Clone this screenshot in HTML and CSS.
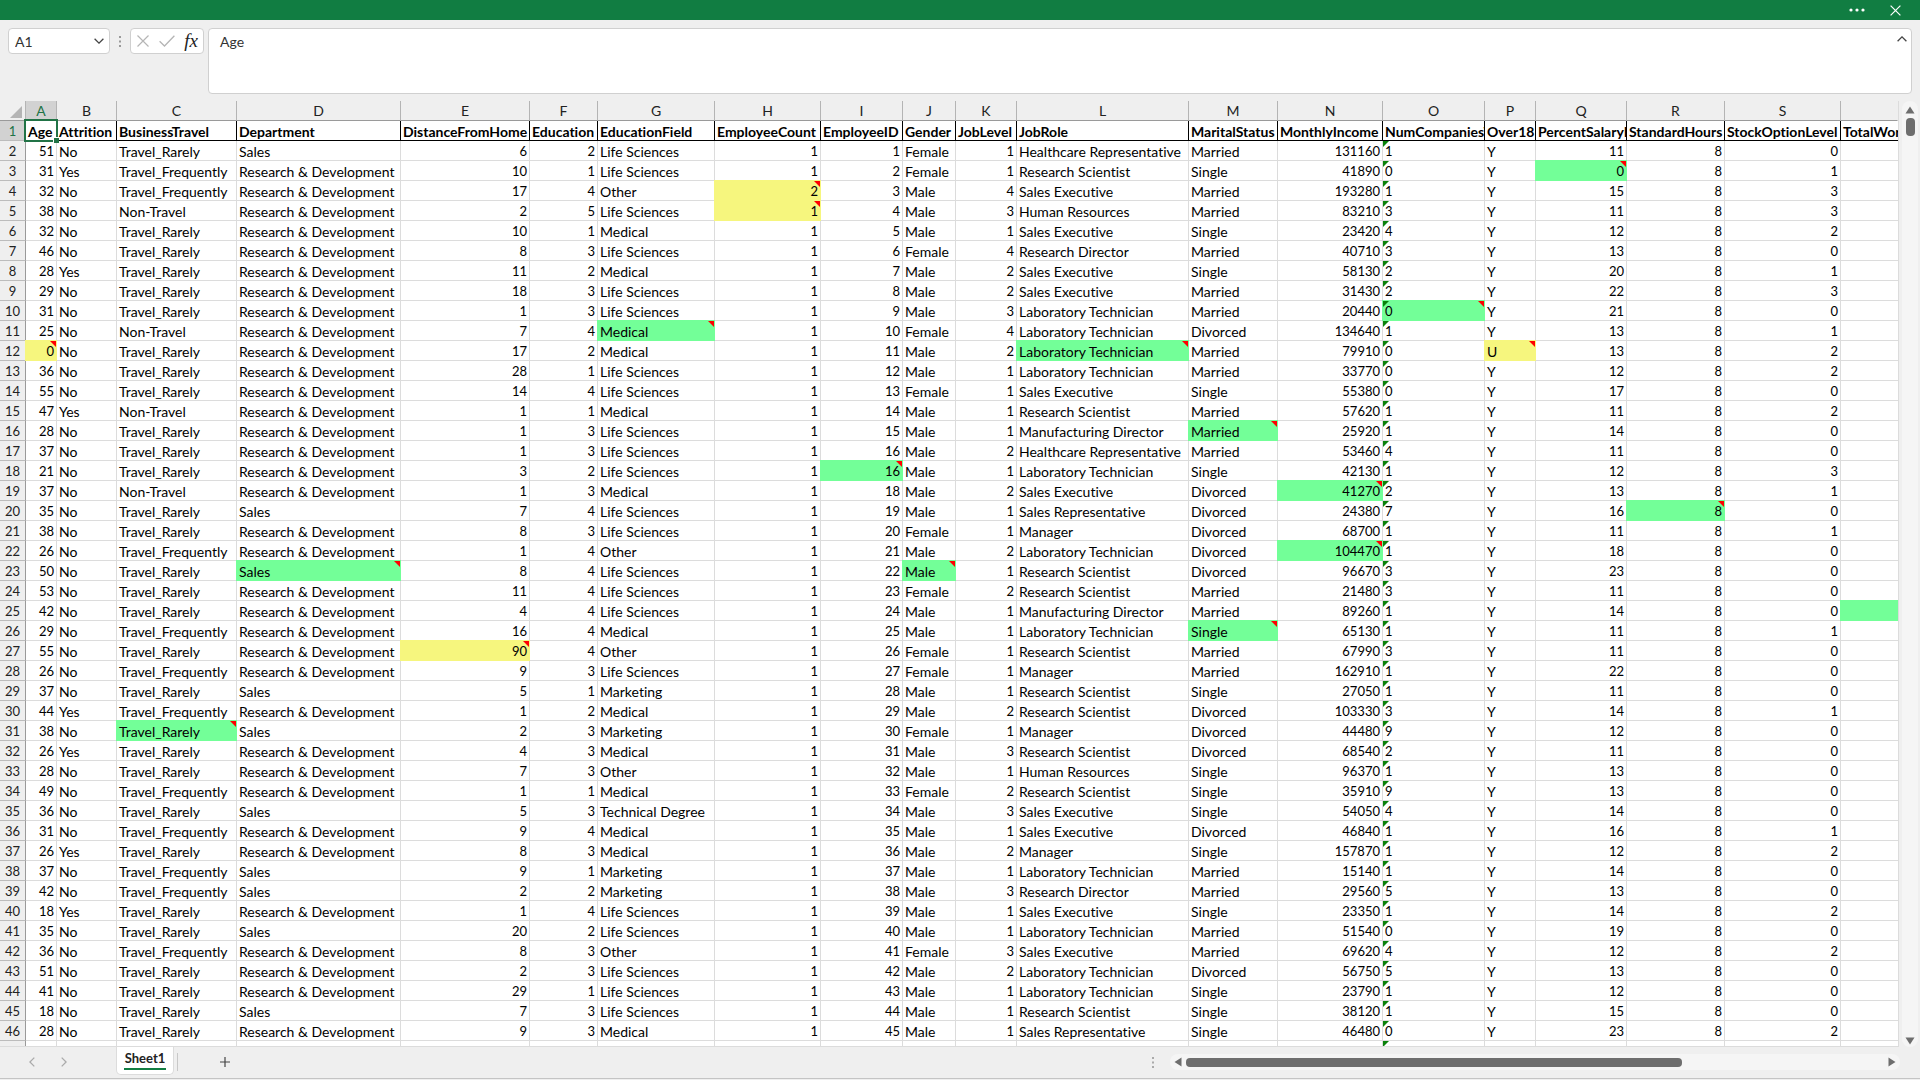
FILE: index.html
```html
<!DOCTYPE html>
<html lang="en">
<head>
<meta charset="utf-8">
<meta name="viewport" content="width=device-width, initial-scale=1">
<title>Sheet1</title>
<link rel="stylesheet" href="styles.css">
</head>
<body>
<header class="titlebar">
  <button class="title-btn" type="button" aria-label="More options">
    <svg width="16" height="4" viewBox="0 0 16 4"><circle cx="2" cy="2" r="1.6" fill="#fff"/><circle cx="8" cy="2" r="1.6" fill="#fff"/><circle cx="14" cy="2" r="1.6" fill="#fff"/></svg>
  </button>
  <button class="title-btn" type="button" aria-label="Close">
    <svg width="11" height="11" viewBox="0 0 11 11"><path d="M.6.6l9.8 9.8M10.4.6L.6 10.4" stroke="#fff" stroke-width="1.2"/></svg>
  </button>
</header>

<section class="formula-bar" aria-label="Formula bar">
  <div class="name-box">
    <input class="name-input" type="text" value="A1" aria-label="Name box">
    <button class="icon-btn" type="button" aria-label="Show names">
      <svg width="10" height="6" viewBox="0 0 10 6"><path d="M.6.7L5 5.1 9.4.7" fill="none" stroke="#444" stroke-width="1.3"/></svg>
    </button>
  </div>
  <svg class="grip" width="2" height="11" viewBox="0 0 2 11"><path d="M0 0h2v2H0zM0 4.500h2v2H0zM0 9h2v2H0z" fill="#999"/></svg>
  <div class="formula-actions">
    <button class="icon-btn" type="button" aria-label="Cancel">
      <svg width="12" height="12" viewBox="0 0 12 12"><path d="M.5.500l11 11M11.500.5l-11 11" stroke="#b5b5b5" stroke-width="1.200"/></svg>
    </button>
    <button class="icon-btn" type="button" aria-label="Enter">
      <svg width="16" height="12" viewBox="0 0 16 12"><path d="M.6 6.200L5.500 11 15.400.8" fill="none" stroke="#b5b5b5" stroke-width="1.300"/></svg>
    </button>
    <button class="icon-btn fx" type="button" aria-label="Insert function">fx</button>
  </div>
  <div class="formula-box">
    <textarea class="formula-input" aria-label="Formula">Age</textarea>
    <button class="icon-btn collapse" type="button" aria-label="Collapse formula bar">
      <svg width="10" height="6" viewBox="0 0 10 6"><path d="M.6 5.300L5 .9l4.400 4.400" fill="none" stroke="#444" stroke-width="1.3"/></svg>
    </button>
  </div>
</section>

<main class="workspace">
  <div class="grid-view">
    <table class="grid">
      <colgroup>
        <col class="w26"><col class="w31"><col class="w60"><col class="w120"><col class="w164"><col class="w129"><col class="w68"><col class="w117"><col class="w106"><col class="w82"><col class="w53"><col class="w61"><col class="w172"><col class="w89"><col class="w105"><col class="w102"><col class="w51"><col class="w91"><col class="w98"><col class="w116"><col>
      </colgroup>
      <thead id="letters"></thead>
      <tbody id="rows"></tbody>
    </table>
  </div>
  <div class="vscroll">
    <svg width="10" height="8" viewBox="0 0 10 8"><path d="M5 .5L9.500 7.500h-9z" fill="#6e6e6e"/></svg>
    <span class="vthumb"></span>
    <svg class="down" width="10" height="8" viewBox="0 0 10 8"><path d="M5 7.500L9.500.5h-9z" fill="#6e6e6e"/></svg>
  </div>
</main>

<footer class="bottom-bar">
  <nav class="sheets" aria-label="Sheets">
    <button class="icon-btn nav" type="button" aria-label="Previous sheet"><svg width="6" height="10" viewBox="0 0 6 10"><path d="M5.300.6L.9 5l4.400 4.400" fill="none" stroke="#aaa" stroke-width="1.300"/></svg></button>
    <button class="icon-btn nav" type="button" aria-label="Next sheet"><svg width="6" height="10" viewBox="0 0 6 10"><path d="M.7.6L5.100 5 .7 9.400" fill="none" stroke="#aaa" stroke-width="1.300"/></svg></button>
    <button class="sheet-tab" type="button"><span class="sheet-name">Sheet1</span></button>
    <span class="tab-line"></span>
    <button class="icon-btn add" type="button" aria-label="New sheet"><svg width="10" height="10" viewBox="0 0 10 10"><path d="M5 0v10M0 5h10" stroke="#444" stroke-width="1.200"/></svg></button>
  </nav>
  <svg class="grip" width="2" height="11" viewBox="0 0 2 11"><path d="M0 0h2v2H0zM0 4.500h2v2H0zM0 9h2v2H0z" fill="#aaa"/></svg>
  <div class="hscroll">
    <svg width="8" height="10" viewBox="0 0 8 10"><path d="M.5 5L7.500.5v9z" fill="#6e6e6e"/></svg>
    <div class="htrack"><span class="hthumb"></span></div>
    <svg width="8" height="10" viewBox="0 0 8 10"><path d="M7.500 5L.5.500v9z" fill="#6e6e6e"/></svg>
  </div>
</footer>
<script src="sheet.js"></script>
</body>
</html>
```
FILE: styles.css
```css
* { box-sizing: border-box; }

body {
  margin: 0;
  height: 100vh;
  display: flex;
  flex-direction: column;
  overflow: hidden;
  background: #efefef;
  color: #000;
  font-family: Lato, "Liberation Sans", sans-serif;
  font-size: 14px;
  font-variant-ligatures: none;
}

button, input, textarea {
  font: inherit;
  color: inherit;
  border: 0;
  padding: 0;
  margin: 0;
  background: none;
}

.icon-btn {
  display: flex;
  align-items: center;
  justify-content: center;
}

/* Title bar */
.titlebar {
  flex: none;
  height: 20px;
  display: flex;
  justify-content: flex-end;
  padding-right: 6px;
  background: #117d42;
}

.title-btn {
  width: 38px;
  display: flex;
  align-items: center;
  justify-content: center;
}

/* Formula bar */
.formula-bar {
  flex: none;
  display: flex;
  align-items: flex-start;
  padding: 8px 8px 7px;
}

.name-box, .formula-actions, .formula-box {
  display: flex;
  background: #fff;
  border: 1px solid #d0d0d0;
  border-radius: 4px;
}

.name-box {
  width: 102px;
  height: 26px;
  padding: 0 5px 0 6px;
}

.name-input { flex: 1; min-width: 0; color: #333; }

.name-box .icon-btn { width: 10px; }

.formula-bar .grip { margin: 8px 9px 0; }

.formula-actions {
  width: 74px;
  height: 26px;
  padding: 0 5px 0 6px;
  justify-content: space-between;
}

.fx {
  font-family: "Liberation Serif", serif;
  font-style: italic;
  font-size: 19px;
  color: #222;
}

.formula-box {
  flex: 1;
  height: 66px;
  margin-left: 4px;
}

.formula-input {
  flex: 1;
  padding: 3px 11px;
  resize: none;
  line-height: 20px;
  color: #333;
}

.collapse { width: 18px; height: 20px; }

/* Grid */
.workspace {
  flex: 1;
  min-height: 0;
  display: flex;
}

.grid-view {
  flex: 1;
  min-width: 0;
  overflow: hidden;
  border-right: 1px solid #dcdcdc;
  border-bottom: 1px solid #dcdcdc;
  background: #fff;
}

.grid {
  width: 100%;
  table-layout: fixed;
  border-collapse: separate;
  border-spacing: 0;
}

.w26 { width: 26px; } .w31 { width: 31px; } .w51 { width: 51px; }
.w53 { width: 53px; } .w60 { width: 60px; } .w61 { width: 61px; }
.w68 { width: 68px; } .w82 { width: 82px; } .w89 { width: 89px; }
.w91 { width: 91px; } .w98 { width: 98px; } .w102 { width: 102px; }
.w105 { width: 105px; } .w106 { width: 106px; } .w116 { width: 116px; }
.w117 { width: 117px; } .w120 { width: 120px; } .w129 { width: 129px; }
.w164 { width: 164px; } .w172 { width: 172px; }

.grid th, .grid td {
  position: relative;
  height: 20px;
  padding: 0;
  line-height: 19px;
  white-space: nowrap;
  border-right: 1px solid #dcdcdc;
  border-bottom: 1px solid #dcdcdc;
}

.clip {
  display: block;
  height: 19px;
  padding: 0 2px;
  overflow: hidden;
  line-height: 21px;
  text-align: left;
}

.num .clip { text-align: right; }
.row-no .clip { text-align: center; }
.num, .warn, .row-no { font-size: 13px; }

.grid thead th {
  background: #efefef;
  border-right: 1px solid #b4b4b4;
  border-bottom: 1px solid #9a9a9a;
  font-weight: normal;
  color: #222;
}

.grid thead th:last-child { border-right-color: #efefef; }

.grid thead .picked {
  background: #d2d2d2;
  color: #217346;
}

.corner svg { display: block; margin: 2px 3px 0 10px; }

.grid .row-no {
  background: #efefef;
  border-right: 1px solid #9a9a9a;
  border-bottom: 1px solid #bcbcbc;
  font-weight: normal;
  color: #222;
}

.grid .row-no.picked { background: #d2d2d2; color: #217346; }

.grid .field {
  font-weight: bold;
  border-right-color: #000;
  border-bottom-color: #000;
}

.grid .field:last-child, .grid td:last-child { border-right: 0; }

.grid .hit-green { background: #73ff98; border-color: #73ff98; box-shadow: -1px 0 #73ff98, 0 -1px #73ff98, -1px -1px #73ff98; }
.grid .hit-yellow { background: #f6f67e; border-color: #f6f67e; box-shadow: -1px 0 #f6f67e, 0 -1px #f6f67e, -1px -1px #f6f67e; }

/* Corner flags: red for a comment, green for text stored as a number */
.note::after, .warn::before {
  content: "";
  position: absolute;
  top: 0;
  width: 6px;
  height: 6px;
}

.note::after { right: 0; background: #f00; clip-path: polygon(0 0, 100% 0, 100% 100%); }
.warn::before { left: 0; background: #0a820a; clip-path: polygon(0 0, 100% 0, 0 100%); }

.cursor {
  position: absolute;
  inset: -2px;
  z-index: 2;
  border: 2px solid #217346;
}

.cursor::after {
  content: "";
  position: absolute;
  right: -3px;
  bottom: -3px;
  width: 5px;
  height: 5px;
  background: #217346;
  box-shadow: -1px -1px 0 #fff;
}

/* Scroll bars */
.vscroll {
  flex: none;
  width: 16px;
  margin: 0 2px 0 3px;
  padding: 5px 0 2px;
  display: flex;
  flex-direction: column;
  align-items: center;
  gap: 4px;
  background: #f5f5f5;
  border-radius: 8px;
}

.vthumb { width: 9px; height: 18px; border-radius: 4px; background: #6e6e6e; }

.down { margin-top: auto; }

.bottom-bar {
  flex: none;
  height: 32px;
  display: flex;
  align-items: flex-start;
  border-bottom: 1px solid #c4c4c4;
  margin-bottom: 1px;
}

.sheets { flex: 1; display: flex; }

.nav { width: 32px; height: 30px; }
.nav:first-child { margin-left: 16px; }

.sheet-tab {
  height: 28px;
  width: 58px;
  margin-left: 36px;
  padding: 0 7px 3px;
  background: #fff;
  border: 1px solid #dcdcdc;
  border-top: 0;
  border-radius: 0 0 5px 5px;
  font-weight: bold;
  font-size: 13px;
  color: #222;
  text-align: center;
}

.sheet-name {
  display: block;
  line-height: 20px;
  border-bottom: 2px solid #117d42;
}

.tab-line { width: 1px; height: 18px; margin: 6px 0 0 3px; background: #c8c8c8; }

.add { width: 30px; height: 30px; margin-left: 32px; }

.bottom-bar .grip { margin: 10px 16px 0 0; }

.hscroll {
  width: 38%;
  height: 16px;
  margin: 7px 20px 0 0;
  padding: 0 4px;
  display: flex;
  align-items: center;
  gap: 4px;
  background: #f5f5f5;
  border-radius: 8px;
}

.htrack { flex: 1; display: flex; }

.hthumb { width: 71%; height: 9px; border-radius: 4px; background: #6e6e6e; }
```
FILE: sheet.js
```js
const fields = ["Age", "Attrition", "BusinessTravel", "Department", "DistanceFromHome", "Education", "EducationField", "EmployeeCount", "EmployeeID", "Gender", "JobLevel", "JobRole", "MaritalStatus", "MonthlyIncome", "NumCompaniesWorked", "Over18", "PercentSalaryHike", "StandardHours", "StockOptionLevel", "TotalWorkingYears"];

// Short codes used in the records below, by column letter.
const names = {
  B: { N: "No", Y: "Yes" },
  C: { R: "Travel_Rarely", F: "Travel_Frequently", N: "Non-Travel" },
  D: { S: "Sales", R: "Research & Development" },
  G: { L: "Life Sciences", M: "Medical", O: "Other", K: "Marketing", T: "Technical Degree" },
  J: { F: "Female", M: "Male" },
  L: { HC: "Healthcare Representative", RS: "Research Scientist", SE: "Sales Executive", HR: "Human Resources", RD: "Research Director", LT: "Laboratory Technician", MD: "Manufacturing Director", SR: "Sales Representative", MG: "Manager" },
  M: { M: "Married", S: "Single", D: "Divorced" }
};

// One record per sheet row, columns A to S, starting at row 2.
const records = `
51 N R S 6 2 L 1 1 F 1 HC M 131160 1 Y 11 8 0
31 Y F R 10 1 L 1 2 F 1 RS S 41890 0 Y 0 8 1
32 N F R 17 4 O 2 3 M 4 SE M 193280 1 Y 15 8 3
38 N N R 2 5 L 1 4 M 3 HR M 83210 3 Y 11 8 3
32 N R R 10 1 M 1 5 M 1 SE S 23420 4 Y 12 8 2
46 N R R 8 3 L 1 6 F 4 RD M 40710 3 Y 13 8 0
28 Y R R 11 2 M 1 7 M 2 SE S 58130 2 Y 20 8 1
29 N R R 18 3 L 1 8 M 2 SE M 31430 2 Y 22 8 3
31 N R R 1 3 L 1 9 M 3 LT M 20440 0 Y 21 8 0
25 N N R 7 4 M 1 10 F 4 LT D 134640 1 Y 13 8 1
0 N R R 17 2 M 1 11 M 2 LT M 79910 0 U 13 8 2
36 N R R 28 1 L 1 12 M 1 LT M 33770 0 Y 12 8 2
55 N R R 14 4 L 1 13 F 1 SE S 55380 0 Y 17 8 0
47 Y N R 1 1 M 1 14 M 1 RS M 57620 1 Y 11 8 2
28 N R R 1 3 L 1 15 M 1 MD M 25920 1 Y 14 8 0
37 N R R 1 3 L 1 16 M 2 HC M 53460 4 Y 11 8 0
21 N R R 3 2 L 1 16 M 1 LT S 42130 1 Y 12 8 3
37 N N R 1 3 M 1 18 M 2 SE D 41270 2 Y 13 8 1
35 N R S 7 4 L 1 19 M 1 SR D 24380 7 Y 16 8 0
38 N R R 8 3 L 1 20 F 1 MG D 68700 1 Y 11 8 1
26 N F R 1 4 O 1 21 M 2 LT D 104470 1 Y 18 8 0
50 N R S 8 4 L 1 22 M 1 RS D 96670 3 Y 23 8 0
53 N R R 11 4 L 1 23 F 2 RS M 21480 3 Y 11 8 0
42 N R R 4 4 L 1 24 M 1 MD M 89260 1 Y 14 8 0
29 N F R 16 4 M 1 25 M 1 LT S 65130 1 Y 11 8 1
55 N R R 90 4 O 1 26 F 1 RS M 67990 3 Y 11 8 0
26 N F R 9 3 L 1 27 F 1 MG M 162910 1 Y 22 8 0
37 N R S 5 1 K 1 28 M 1 RS S 27050 1 Y 11 8 0
44 Y F R 1 2 M 1 29 M 2 RS D 103330 3 Y 14 8 1
38 N R S 2 3 K 1 30 F 1 MG D 44480 9 Y 12 8 0
26 Y R R 4 3 M 1 31 M 3 RS D 68540 2 Y 11 8 0
28 N R R 7 3 O 1 32 M 1 HR S 96370 1 Y 13 8 0
49 N F R 1 1 M 1 33 F 2 RS S 35910 9 Y 13 8 0
36 N R S 5 3 T 1 34 M 3 SE S 54050 4 Y 14 8 0
31 N F R 9 4 M 1 35 M 1 SE D 46840 1 Y 16 8 1
26 Y R R 8 3 M 1 36 M 2 MG S 157870 1 Y 12 8 2
37 N F S 9 1 K 1 37 M 1 LT M 15140 1 Y 14 8 0
42 N F S 2 2 K 1 38 M 3 RD M 29560 5 Y 13 8 0
18 Y R R 1 4 L 1 39 M 1 SE S 23350 1 Y 14 8 2
35 N R S 20 2 L 1 40 M 1 LT M 51540 0 Y 19 8 0
36 N F R 8 3 O 1 41 F 3 SE M 69620 4 Y 12 8 2
51 N R R 2 3 L 1 42 M 2 LT D 56750 5 Y 13 8 0
41 N R R 29 1 L 1 43 M 1 LT S 23790 1 Y 12 8 0
18 N R S 7 3 L 1 44 M 1 RS S 38120 1 Y 15 8 0
28 N R R 9 3 M 1 45 M 1 SR S 46480 0 Y 23 8 2`.trim().split("\n").map(line => line.split(" "));

const green = "Q3 O10 G11 L12 M16 I18 N19 R20 N22 D23 J23 T25 M26 C31".split(" ");
const yellow = "H4 H5 A12 P12 E27".split(" ");
const numeric = "AEFHIKNQRS";
const letters = "ABCDEFGHIJKLMNOPQRST".split("");

function cell(row, tag, className, text) {
  const el = document.createElement(tag);
  el.className = className;
  if (text !== undefined) {
    const clip = document.createElement("span");
    clip.className = "clip";
    clip.textContent = text;
    el.append(clip);
  }
  row.append(el);
  return el;
}

const head = document.getElementById("letters").insertRow();
cell(head, "th", "corner").innerHTML = '<svg width="12" height="12" viewBox="0 0 12 12"><path d="M12 0v12H0z" fill="#b4b4b4"/></svg>';
letters.forEach(letter => {
  const el = cell(head, "th", letter === "A" ? "picked" : "");
  el.scope = "col";
  if (letter !== "T") el.textContent = letter;
});

const body = document.getElementById("rows");
const first = body.insertRow();
cell(first, "th", "row-no picked", "1");
fields.forEach((name, i) => {
  const el = cell(first, "th", "field", name);
  if (i === 0) {
    const cursor = document.createElement("span");
    cursor.className = "cursor";
    el.append(cursor);
  }
});

records.forEach((record, r) => {
  const row = body.insertRow();
  const number = r + 2;
  cell(row, "th", "row-no", number);
  letters.forEach((letter, c) => {
    const id = letter + number;
    const classes = [];
    if (numeric.includes(letter)) classes.push("num");
    if (letter === "O") classes.push("warn");
    if (green.includes(id)) classes.push("hit-green");
    if (yellow.includes(id)) classes.push("hit-yellow");
    if (classes.some(name => name.startsWith("hit")) && letter !== "T") classes.push("note");
    const value = record[c] ?? "";
    cell(row, "td", classes.join(" "), names[letter] ? names[letter][value] : value);
  });
});

const last = body.insertRow();
cell(last, "th", "row-no");
letters.forEach(letter => cell(last, "td", letter === "O" ? "warn" : ""));
```
